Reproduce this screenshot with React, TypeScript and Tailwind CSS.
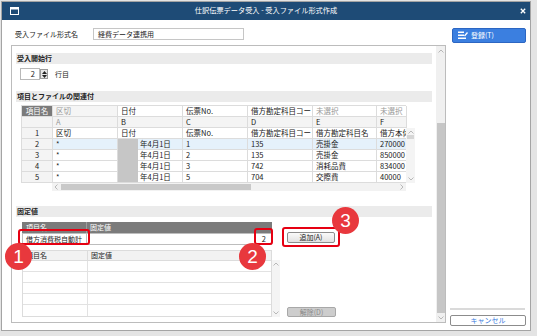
import React from 'react';

const colW = ['w-[31px]', 'w-[65px]', 'w-[65px]', 'w-[65px]', 'w-[65px]', 'w-[64px]', 'w-[30px]'];

function Cell({ i, children, cls = '' }: { i: number; children?: React.ReactNode; cls?: string }) {
  return (
    <div
      className={`${colW[i]} h-full shrink-0 border-r border-b border-[#dcdcdc] flex items-center overflow-hidden whitespace-nowrap ${
        i === 0 ? 'justify-center' : 'pl-[3px]'
      } ${cls}`}
    >
      {children}
    </div>
  );
}

function SectionBar({ children }: { children: React.ReactNode }) {
  return (
    <div className="h-[11px] bg-[#ebebeb] flex items-center pl-[1px] text-[7px] font-bold text-[#222] leading-none">
      {children}
    </div>
  );
}

function Up({ cls = '' }: { cls?: string }) {
  return (
    <svg width="6" height="4" viewBox="0 0 6 4" className={cls}>
      <path d="M0.5 3.5 L3 1 L5.5 3.5" fill="none" stroke="#a8a8a8" strokeWidth="0.8" />
    </svg>
  );
}
function Down({ cls = '' }: { cls?: string }) {
  return (
    <svg width="6" height="4" viewBox="0 0 6 4" className={cls}>
      <path d="M0.5 0.5 L3 3 L5.5 0.5" fill="none" stroke="#a8a8a8" strokeWidth="0.8" />
    </svg>
  );
}

const data = [
  ['2', '*', '年4月1日', '1', '135', '売掛金', '270000'],
  ['3', '*', '年4月1日', '2', '135', '売掛金', '850000'],
  ['4', '*', '年4月1日', '3', '742', '消耗品費', '834000'],
  ['5', '*', '年4月1日', '5', '704', '交際費', '40000'],
];

function Badge({ n, cls }: { n: string; cls: string }) {
  return (
    <div
      className={`absolute w-[27px] h-[27px] rounded-full bg-[#e8383d] text-white flex items-center justify-center font-['Liberation_Sans',Arial,sans-serif] text-[19px] leading-none ${cls}`}
    >
      {n}
    </div>
  );
}

export default function App() {
  return (
    <div className="relative w-[537px] h-[336px] bg-[#e4e4e4] overflow-hidden font-['Noto_Sans_CJK_JP','Noto_Sans',sans-serif] text-[#222]">
      {/* window */}
      <div className="mt-[1px] ml-[1px] w-[530px] h-[330px] border border-[#a4a4a4] flex flex-col">
        {/* title bar */}
        <div className="h-[18px] bg-[#1e4b76] flex items-center text-white shrink-0">
          <div className="w-[40px] pl-[8px] flex items-center">
            <svg width="9" height="8" viewBox="0 0 9 8">
              <rect x="0.5" y="0.5" width="8" height="7" fill="none" stroke="#fff" strokeWidth="1" />
              <rect x="0.5" y="0.5" width="8" height="2" fill="#fff" />
            </svg>
          </div>
          <div className="flex-1 text-center text-[7.2px] leading-none">仕訳伝票データ受入 - 受入ファイル形式作成</div>
          <div className="w-[40px] flex justify-end pr-[4px]">
            <svg width="6" height="6" viewBox="0 0 6 6">
              <path d="M0.8 0.8 L5.2 5.2 M5.2 0.8 L0.8 5.2" stroke="#fff" strokeWidth="1.3" />
            </svg>
          </div>
        </div>
        {/* body */}
        <div className="flex-1 flex bg-white">
          {/* left column */}
          <div className="w-[446px] pl-[9px] pt-[8px] flex flex-col shrink-0">
            <div className="h-[12px] flex items-center">
              <div className="ml-[4px] w-[78px] text-[7px] leading-none">受入ファイル形式名</div>
              <div className="w-[151px] h-[12px] border border-[#c6c6c6] flex items-center pl-[4px] text-[7px] leading-none">
                経費データ連携用
              </div>
            </div>
            {/* main panel */}
            <div className="mt-[5px] w-[435px] h-[278px] border border-[#bcbcbc] flex">
              <div className="flex-1 px-[4px] pt-[7px] flex flex-col">
                <SectionBar>受入開始行</SectionBar>
                <div className="mt-[4px] ml-[4px] h-[12px] flex items-center">
                  <div className="w-[20px] h-[12px] border border-[#b8b8b8] flex items-center justify-end pr-[4px] text-[7.5px] leading-none">
                    2
                  </div>
                  <div className="w-[8px] h-[10px] border border-[#9a9a9a] bg-[#e6e6e6] flex flex-col items-center justify-center gap-[1px]">
                    <svg width="5" height="3" viewBox="0 0 5 3">
                      <path d="M0 3 L2.5 0 L5 3 Z" fill="#222" />
                    </svg>
                    <svg width="5" height="3" viewBox="0 0 5 3">
                      <path d="M0 0 L2.5 3 L5 0 Z" fill="#222" />
                    </svg>
                  </div>
                  <div className="ml-[7px] text-[7px] leading-none">行目</div>
                </div>
                <div className="mt-[11px]">
                  <SectionBar>項目とファイルの関連付</SectionBar>
                </div>
                {/* mapping table */}
                <div className="mt-[3px] ml-[5px] flex flex-col text-[7.5px] leading-none">
                  <div className="w-[385px] border-l border-t border-[#dcdcdc]">
                    <div className="h-[11px] flex">
                      <Cell i={0} cls="bg-[#7b7b7b] text-white border-[#9a9a9a]">項目名</Cell>
                      <Cell i={1} cls="bg-[#f5f5f5] text-[#9a9a9a]">区切</Cell>
                      <Cell i={2}>日付</Cell>
                      <Cell i={3}>伝票No.</Cell>
                      <Cell i={4}>借方勘定科目コー</Cell>
                      <Cell i={5} cls="text-[#9a9a9a]">未選択</Cell>
                      <Cell i={6} cls="text-[#9a9a9a]">未選択</Cell>
                    </div>
                    <div className="h-[11px] flex bg-[#f4f4f4]">
                      <Cell i={0}></Cell>
                      <Cell i={1} cls="text-[#9a9a9a]">A</Cell>
                      <Cell i={2}>B</Cell>
                      <Cell i={3}>C</Cell>
                      <Cell i={4}>D</Cell>
                      <Cell i={5}>E</Cell>
                      <Cell i={6}>F</Cell>
                    </div>
                  </div>
                  <div className="flex">
                    <div className="w-[385px] border-l border-[#dcdcdc]">
                      <div className="h-[11px] flex">
                        <Cell i={0} cls="bg-[#f4f4f4]">1</Cell>
                        <Cell i={1}>区切</Cell>
                        <Cell i={2}>日付</Cell>
                        <Cell i={3}>伝票No.</Cell>
                        <Cell i={4}>借方勘定科目コー</Cell>
                        <Cell i={5}>借方勘定科目名</Cell>
                        <Cell i={6}>借方本体</Cell>
                      </div>
                      {data.map((r, ri) => (
                        <div key={ri} className={`h-[11px] flex ${ri === 0 ? 'bg-[#e5f1fb]' : ''}`}>
                          <Cell i={0} cls="bg-[#f4f4f4]">{r[0]}</Cell>
                          <Cell i={1}>{r[1]}</Cell>
                          <div className="w-[65px] h-full shrink-0 border-r border-b border-[#dcdcdc] flex items-center pl-[22px] whitespace-nowrap overflow-hidden">
                            {r[2]}
                          </div>
                          <Cell i={3}>{r[3]}</Cell>
                          <Cell i={4}>{r[4]}</Cell>
                          <Cell i={5}>{r[5]}</Cell>
                          <Cell i={6}>{r[6]}</Cell>
                        </div>
                      ))}
                    </div>
                    <div className="w-[9px] h-[55px] bg-[#f4f4f4] flex flex-col items-center justify-between py-[2px]">
                      <div className="flex flex-col items-center w-full">
                        <Up />
                        <div className="mt-[1px] w-[7px] h-[4px] bg-[#d6d6d6]" />
                      </div>
                      <Down />
                    </div>
                  </div>
                  <div className="h-[8px] flex">
                    <div className="w-[31px]" />
                    <div className="w-[354px] bg-[#f2f2f2] flex items-center px-[2px] justify-between">
                      <div className="flex items-center">
                        <svg width="4" height="6" viewBox="0 0 4 6">
                          <path d="M3.5 0.5 L1 3 L3.5 5.5" fill="none" stroke="#a8a8a8" strokeWidth="0.8" />
                        </svg>
                        <div className="ml-[3px] w-[190px] h-[6px] bg-[#c9c9c9]" />
                      </div>
                      <svg width="4" height="6" viewBox="0 0 4 6">
                        <path d="M0.5 0.5 L3 3 L0.5 5.5" fill="none" stroke="#a8a8a8" strokeWidth="0.8" />
                      </svg>
                    </div>
                  </div>
                </div>
                <div className="mt-[15px]">
                  <SectionBar>固定値</SectionBar>
                </div>
                {/* fixed values */}
                <div className="mt-[5px] ml-[6px] flex text-[7px] leading-none">
                  <div className="w-[258px] flex flex-col">
                    <div className="w-[250px] h-[11px] bg-[#7b7b7b] text-white flex">
                      <div className="w-[65px] border-r border-[#9c9c9c] flex items-center pl-[4px]">項目名</div>
                      <div className="flex-1 flex items-center pl-[3px]">固定値</div>
                    </div>
                    <div className="w-[250px] h-[12px] flex">
                      <div className="w-[65px] border border-[#bdbdbd] flex items-center pl-[3px] whitespace-nowrap overflow-hidden">
                        借方消費税自動計
                      </div>
                      <div className="flex-1 border border-l-0 border-[#bdbdbd] flex items-center justify-end pr-[5px] text-[7.5px]">
                        2
                      </div>
                    </div>
                    <div className="mt-[5px] w-[250px] h-[10px] bg-[#f2f2f2] border border-b-0 border-[#dcdcdc] flex">
                      <div className="w-[65px] border-r border-[#dcdcdc] flex items-center pl-[3px]">項目名</div>
                      <div className="flex-1 flex items-center pl-[3px]">固定値</div>
                    </div>
                    <div className="flex">
                      <div className="w-[250px] border border-[#dcdcdc]">
                        {[0, 1, 2, 3, 4].map((k) => (
                          <div key={k} className={`h-[11px] flex ${k < 4 ? 'border-b border-[#e2e2e2]' : ''}`}>
                            <div className="w-[65px] border-r border-[#e2e2e2]" />
                            <div className="flex-1" />
                          </div>
                        ))}
                      </div>
                      <div className="w-[8px] bg-[#f4f4f4] flex flex-col items-center justify-between py-[2px]">
                        <Up />
                        <Down />
                      </div>
                    </div>
                  </div>
                  <div className="ml-[7px] flex flex-col justify-between pt-[10px]">
                    <div className="w-[48px] h-[11px] border border-[#8c8c8c] rounded-[2px] bg-gradient-to-b from-[#fafafa] to-[#e2e2e2] flex items-center justify-center text-[7px]">
                      追加(A)
                    </div>
                    <div className="w-[49px] h-[10px] border border-[#a8a8a8] rounded-[2px] bg-[#cdcdcd] flex items-center justify-center text-[7px] text-[#8a8a8a]">
                      解除(D)
                    </div>
                  </div>
                </div>
              </div>
              {/* panel scrollbar */}
              <div className="w-[9px] bg-[#f0f0f0] flex flex-col items-center pt-[3px] pb-[2px]">
                <Up />
                <div className="mt-[70px] w-[8px] flex-1 bg-[#c6c6c6]" />
                <Down cls="mt-[3px]" />
              </div>
            </div>
          </div>
          {/* right column */}
          <div className="flex-1 px-[2px] pt-[8px] pb-[4px] flex flex-col">
            <div className="ml-[2px] w-[74px] h-[15px] bg-[#3b7fe0] border border-[#2c66c2] rounded-[2px] flex items-center pl-[5px] text-white text-[7px] leading-none">
              <svg width="10" height="9" viewBox="0 0 10 9" className="mr-[3px]">
                <rect x="0" y="0.5" width="6" height="1.5" fill="#fff" />
                <rect x="0" y="3.5" width="6" height="1.5" fill="#fff" />
                <rect x="0" y="6.5" width="8" height="1.5" fill="#fff" />
                <path d="M6.5 5 L9.5 1.5" stroke="#fff" strokeWidth="1.3" />
              </svg>
              登録(T)
            </div>
            <div className="flex-1" />
            <div className="w-[75px] h-[2px] bg-[#dadada]" />
            <div className="mt-[5px] w-[76px] h-[11px] border border-[#8c8c8c] rounded-[2px] bg-white flex items-center justify-center text-[7px] text-[#3a7de0] leading-none">
              キャンセル
            </div>
          </div>
        </div>
      </div>

      {/* gray redaction block over date column */}
      <div className="absolute left-[118px] top-[139px] w-[20px] h-[43px] bg-[#c6c6c6]" />

      {/* red highlight boxes */}
      <div className="absolute left-[18px] top-[229px] w-[72px] h-[16px] border-2 border-[#e60012] rounded-[3px]" />
      <div className="absolute left-[254px] top-[228px] w-[19px] h-[17px] border-2 border-[#e60012] rounded-[3px]" />
      <div className="absolute left-[282px] top-[227px] w-[58px] h-[20px] border-2 border-[#e60012] rounded-[3px]" />

      <Badge n="1" cls="left-[5px] top-[243px]" />
      <Badge n="2" cls="left-[239px] top-[243px]" />
      <Badge n="3" cls="left-[332px] top-[207px]" />
    </div>
  );
}
